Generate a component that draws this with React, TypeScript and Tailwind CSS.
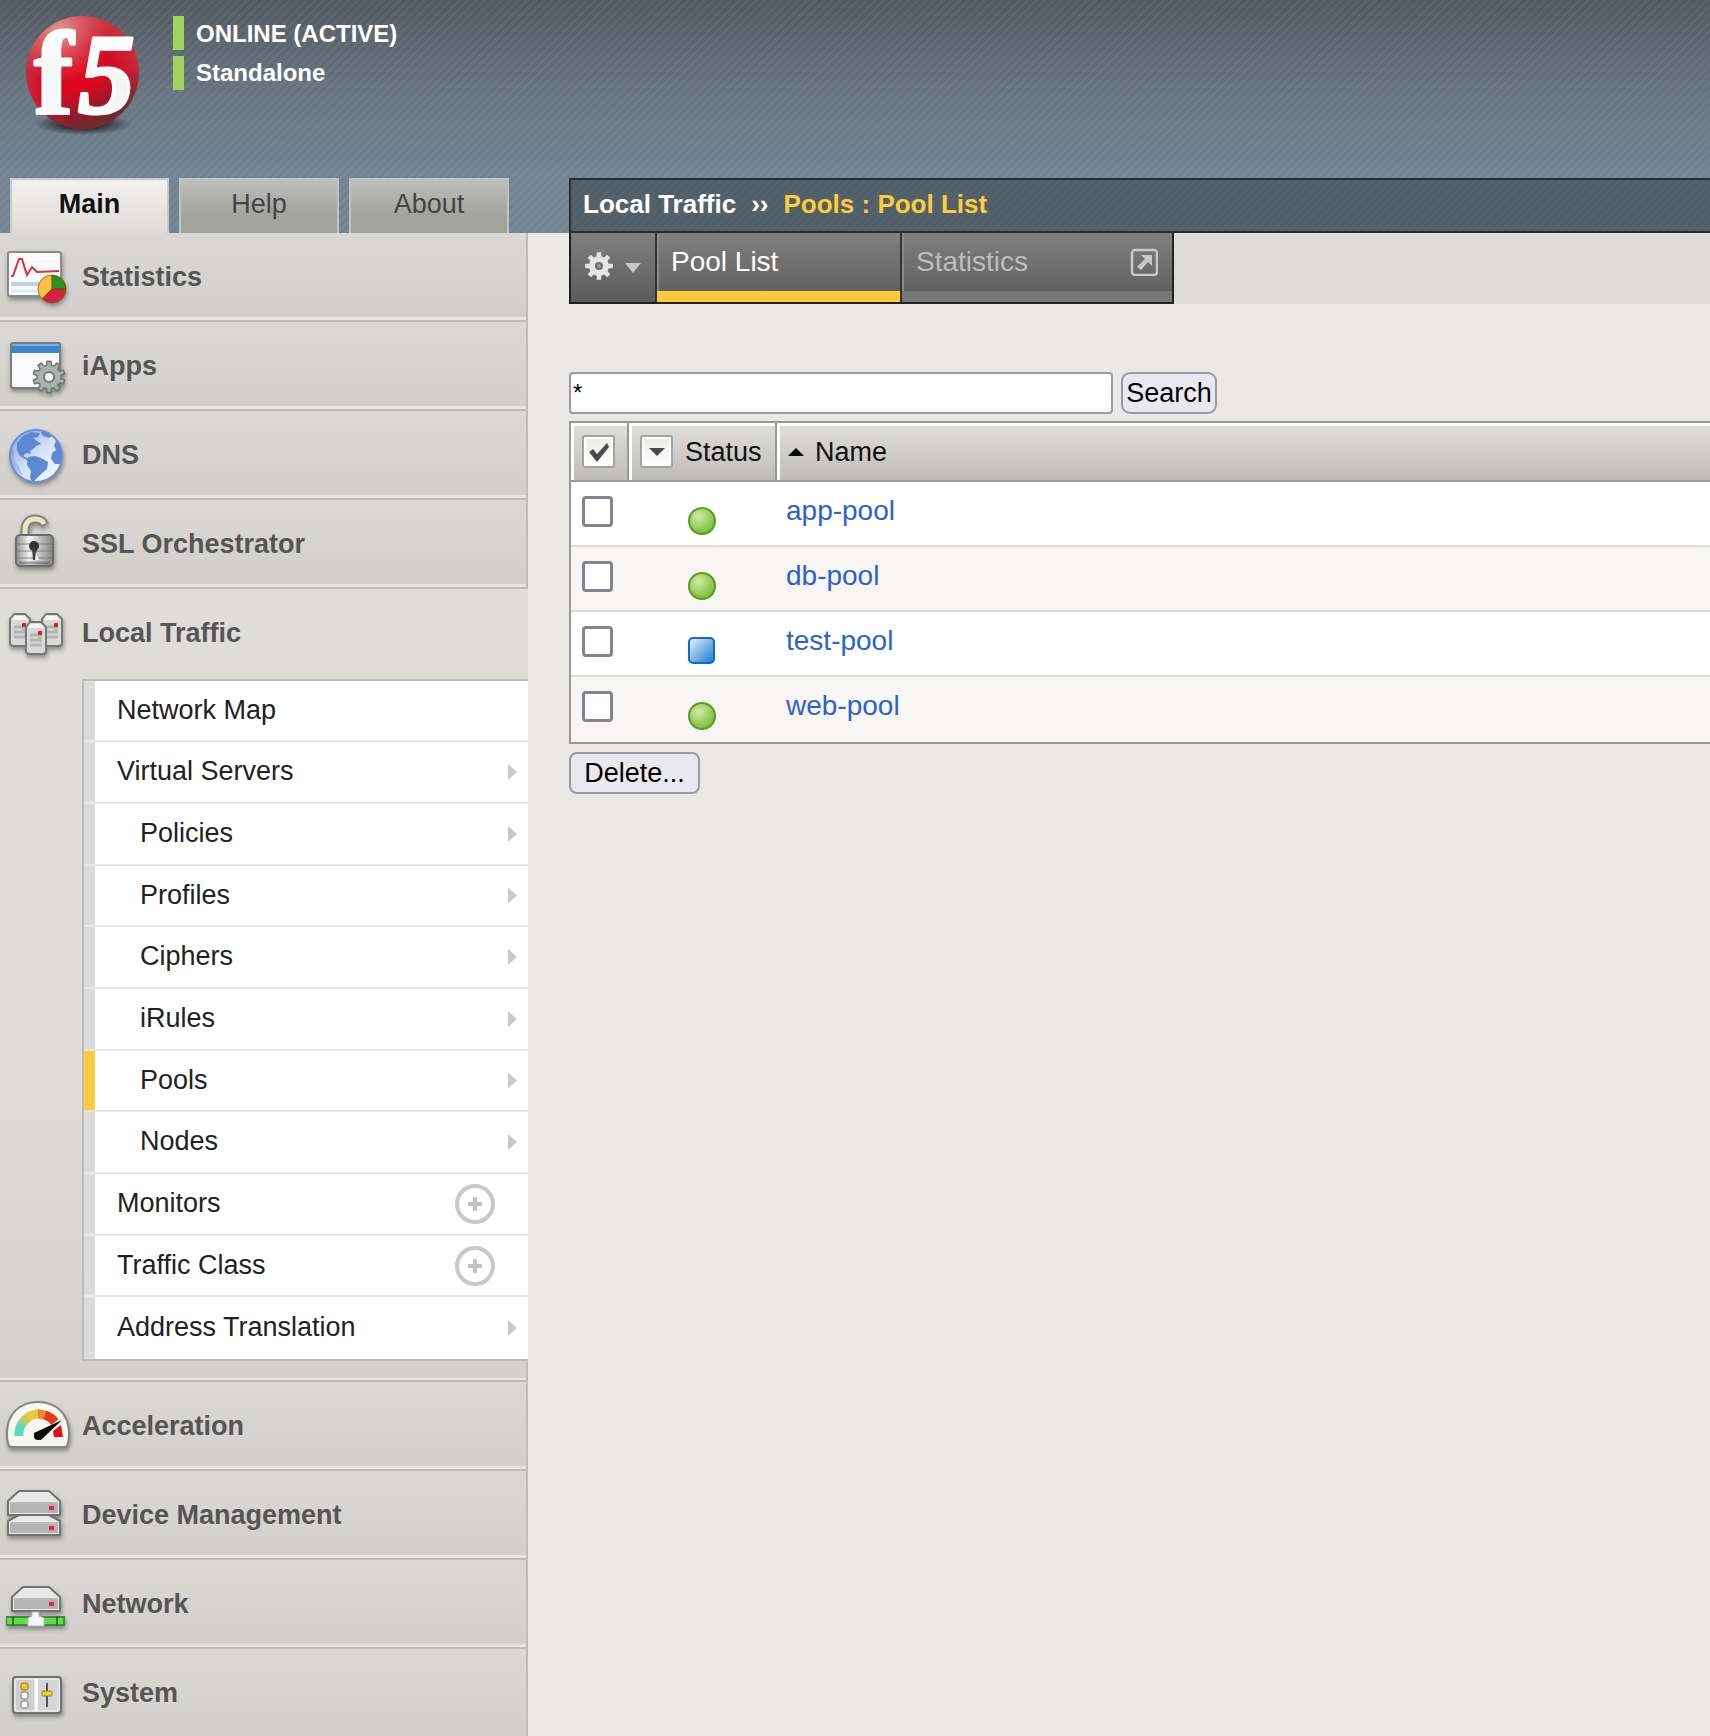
import React, { useState } from "react";

const shadow = "[filter:drop-shadow(1px_3px_2px_rgba(0,0,0,0.35))]";

function gearPath(cx: number, cy: number, teeth: number, outer: number, inner: number) {
  const step = (Math.PI * 2) / teeth;
  const pts: string[] = [];
  for (let i = 0; i < teeth; i++) {
    const a = i * step - Math.PI / 2;
    const corners: [number, number][] = [
      [a - step * 0.3, inner],
      [a - step * 0.2, outer],
      [a + step * 0.2, outer],
      [a + step * 0.3, inner],
    ];
    for (const [ang, r] of corners) {
      pts.push(`${(cx + Math.cos(ang) * r).toFixed(2)} ${(cy + Math.sin(ang) * r).toFixed(2)}`);
    }
  }
  return `M${pts.join("L")}Z`;
}

function Logo() {
  return (
    <svg className="h-[140px] w-[150px]" viewBox="0 0 150 140" role="img" aria-label="f5">
      <defs>
        <radialGradient id="ball" cx="0.5" cy="0.6" r="0.55">
          <stop offset="0" stopColor="#e2061f" />
          <stop offset="0.6" stopColor="#d30b25" />
          <stop offset="1" stopColor="#c8303c" />
        </radialGradient>
        <radialGradient id="shine" cx="0.3" cy="0.14" r="0.45">
          <stop offset="0" stopColor="#eeb0a8" stopOpacity="0.85" />
          <stop offset="1" stopColor="#e06a68" stopOpacity="0" />
        </radialGradient>
        <linearGradient id="ballshade" x1="0.4" y1="0.5" x2="0.6" y2="1">
          <stop offset="0.3" stopColor="#4a2a2c" stopOpacity="0" />
          <stop offset="0.85" stopColor="#4a3030" stopOpacity="0.7" />
        </linearGradient>
        <linearGradient id="letters" x1="0" y1="0" x2="0" y2="1">
          <stop offset="0" stopColor="#ffffff" />
          <stop offset="0.6" stopColor="#f2f5f5" />
          <stop offset="1" stopColor="#ffffff" />
        </linearGradient>
        <radialGradient id="ground">
          <stop offset="0.4" stopColor="#20262c" stopOpacity="0.9" />
          <stop offset="1" stopColor="#20262c" stopOpacity="0" />
        </radialGradient>
      </defs>
      <ellipse cx="83" cy="124" rx="48" ry="11" fill="url(#ground)" />
      <circle cx="82.500" cy="72.500" r="56.500" fill="url(#ball)" />
      <circle cx="82.500" cy="72.500" r="56.500" fill="url(#ballshade)" />
      <circle cx="82.500" cy="72.500" r="56.500" fill="url(#shine)" />
      <g fill="url(#letters)" stroke="#fbfcfc" strokeWidth="3" strokeLinejoin="round" fontWeight="700" fontFamily="'Liberation Serif', serif">
        <text x="34" y="114" fontSize="118">f</text>
        <text x="78" y="113" fontSize="114" fontStyle="italic">5</text>
      </g>
    </svg>
  );
}

function StatisticsIcon() {
  return (
    <svg className={`size-16 ${shadow}`} viewBox="0 -3 64 64" aria-hidden="true">
      <rect x="2" y="4" width="53" height="44" rx="2" fill="#fdfdfd" stroke="#8a8a8a" strokeWidth="2" />
      <path d="M5 14h48M5 20h48M5 26h48" stroke="#eceff2" strokeWidth="1" />
      <path d="M5 36h30" stroke="#b9d3e8" strokeWidth="4" />
      <path d="M5 43h28" stroke="#dfe9f2" strokeWidth="3" />
      <path d="M5 28h2l6-17h3l5 16 5-8 5 5 22-1" fill="none" stroke="#d0343f" strokeWidth="2" />
      <circle cx="46" cy="41" r="14" fill="#d4233a" />
      <path d="M46 41V27a14 14 0 0 1 14 14Z" fill="#27941f" />
      <path d="M46 41V27a14 14 0 0 0-10 24Z" fill="#f5c542" />
      <path d="M46 27V41H60M46 41 36 51" fill="none" stroke="#7a3a18" strokeWidth="1" />
      <circle cx="46" cy="41" r="14" fill="none" stroke="#7c4a20" strokeOpacity="0.6" strokeWidth="1" />
    </svg>
  );
}

function IAppsIcon() {
  return (
    <svg className={`size-16 ${shadow}`} viewBox="-1 -3 64 64" aria-hidden="true">
      <rect x="4" y="6" width="49" height="45" rx="2" fill="#f9f9fb" stroke="#7b7b7b" strokeWidth="2" />
      <rect x="5" y="7" width="47" height="9" fill="#3d86c6" />
      <path d="M5 8h47" stroke="#6db2ec" strokeWidth="2" />
      <path d={gearPath(42, 40, 10, 16, 12)} fill="#a7b1ae" stroke="#6f7775" strokeWidth="1.500" strokeLinejoin="round" />
      <circle cx="42" cy="40" r="5" fill="#f4f4f4" stroke="#6f7775" strokeWidth="2" />
    </svg>
  );
}

function DnsIcon() {
  return (
    <svg className={`size-16 ${shadow}`} viewBox="-1 -2 64 64" aria-hidden="true">
      <defs>
        <linearGradient id="sea" x1="0" y1="0" x2="1" y2="1">
          <stop offset="0" stopColor="#7d9ede" />
          <stop offset="0.5" stopColor="#d5e1f6" />
          <stop offset="1" stopColor="#ffffff" />
        </linearGradient>
        <clipPath id="globe">
          <circle cx="29" cy="31" r="26" />
        </clipPath>
      </defs>
      <circle cx="29" cy="31" r="26" fill="url(#sea)" />
      <g fill="#5d89d2" clipPath="url(#globe)">
        <path d="M10 18 16 11l8-4 9 1-2 4-5 1 4 3 4 3-5 2-3 3-3 2 1 3-5-1-3 3 4 2 5 4-4-1-8-5-3-6Z" />
        <path d="M21 32l7-1 6 2 7 4-1 7-6 5-6 6-2 3-3-5 1-7-4-6Z" />
        <path d="M34 7l7-1 5 4-4 3-6-2Z" />
        <path d="M57 16l-8 0-2 5 2 4-4 3-1 6 4 5 5 0 1 6 5-6V16Z" />
        <path d="M2 20l5 6 0 8 5 8 4 9-9-6-6-12Z" opacity="0.35" />
      </g>
      <circle cx="29" cy="31" r="26" fill="none" stroke="#6a8fd8" strokeWidth="2" />
    </svg>
  );
}

function LockIcon() {
  return (
    <svg className={`size-16 ${shadow}`} viewBox="-1 -1 64 64" aria-hidden="true">
      <defs>
        <linearGradient id="lockbody" x1="0" y1="0" x2="1" y2="0">
          <stop offset="0" stopColor="#8d8d8d" />
          <stop offset="0.35" stopColor="#f4f4f4" />
          <stop offset="1" stopColor="#858585" />
        </linearGradient>
      </defs>
      <path d="M18 25V17c0-6 3-11 10-11 5 0 8 2 10 6" fill="none" stroke="#86866a" strokeWidth="9" />
      <path d="M18 25V17c0-6 3-11 10-11 5 0 8 2 9 5" fill="none" stroke="#e6e5c8" strokeWidth="5" />
      <rect x="9" y="22" width="37" height="31" rx="4" fill="url(#lockbody)" stroke="#6d6d6d" strokeWidth="2" />
      <path d="M10 31h35M10 38h35M10 45h35" stroke="#6d6d6d" strokeOpacity="0.4" strokeWidth="2" />
      <path d="M12 50h31" stroke="#555" strokeOpacity="0.5" strokeWidth="3" />
      <circle cx="27" cy="33" r="5" fill="#333" />
      <path d="M25 34h4l2 13h-5Z" fill="#3b3b3b" />
      <path d="M29 38l3 9h-4Z" fill="#eee" />
    </svg>
  );
}

function MiniServer({ x, y }: { x: number; y: number }) {
  return (
    <g transform={`translate(${x} ${y})`}>
      <path d="M1 6 5 1H16L21 6V31L19 33H3L1 31Z" fill="#d9d9d9" stroke="#777" strokeWidth="2" strokeLinejoin="round" />
      <path d="M5 3H16l3 4H3Z" fill="#f6f6f6" />
      <path d="M5 14h12M5 19h12M5 24h12" stroke="#b2b2b2" strokeWidth="3" />
      <rect x="13" y="10" width="4" height="4" fill="#e8142c" />
      <rect x="13" y="15" width="4" height="3" fill="#8fe07a" />
    </g>
  );
}

function LocalTrafficIcon() {
  return (
    <svg className={`size-16 ${shadow}`} viewBox="0 -3 64 64" aria-hidden="true">
      <MiniServer x={3} y={9} />
      <MiniServer x={35} y={9} />
      <MiniServer x={19} y={17} />
    </svg>
  );
}

function AccelerationIcon() {
  return (
    <svg className={`size-16 ${shadow}`} viewBox="-1 0 64 64" aria-hidden="true">
      <path d="M3 53C0 50 0 45 0 39 0 20 13 8 31 8s31 12 31 31c0 6 0 11-3 14Z" fill="#f7f7f4" stroke="#858585" strokeWidth="2" />
      <path d="M12 42A19 20 0 0 1 16 28" fill="none" stroke="#5fd8c4" strokeWidth="9" />
      <path d="M15 30A19 20 0 0 1 22 23" fill="none" stroke="#b3cf66" strokeWidth="9" />
      <path d="M20 24A19 20 0 0 1 33 20" fill="none" stroke="#ecc83c" strokeWidth="9" />
      <path d="M31 20A19 20 0 0 1 40 22" fill="none" stroke="#ea8a25" strokeWidth="9" />
      <path d="M38 21A20 20 0 0 1 48 28" fill="none" stroke="#e33a18" strokeWidth="9" />
      <path d="M54 31l2 12h-9l-1-6Z" fill="#e30b17" />
      <path d="M55 26 34 46l-6-2-1-5Z" fill="#0b0b0b" />
      <circle cx="31" cy="42" r="4" fill="#0b0b0b" />
    </svg>
  );
}

function Chassis({ y, x = 2, w = 52, tall = true }: { y: number; x?: number; w?: number; tall?: boolean }) {
  const h = tall ? 24 : 20;
  return (
    <g transform={`translate(${x} ${y})`}>
      <path
        d={`M0 ${h - 14}L11 0H${w - 11}L${w} ${h - 14}V${h}H0Z`}
        fill="#e9e9e9"
        stroke="#727272"
        strokeWidth="2"
        strokeLinejoin="round"
      />
      <rect x="2" y={h - 11} width={w - 4} height="9" fill="#b4b4b4" />
      <path d={`M2 ${h - 12}H${w - 2}`} stroke="#8d8d8d" strokeWidth="1" />
      <rect x={w - 11} y={h - 9} width="5" height="4" fill="#ee2236" />
    </g>
  );
}

function DeviceIcon() {
  return (
    <svg className={`size-16 ${shadow}`} viewBox="0 -4 64 64" aria-hidden="true">
      <Chassis y={28} tall={false} />
      <Chassis y={4} />
    </svg>
  );
}

function NetworkIcon() {
  return (
    <svg className={`size-16 ${shadow}`} viewBox="0 -5 64 64" aria-hidden="true">
      <Chassis y={10} x={6} w={48} tall />
      <path d="M0 40h58v8H0Z" fill="#63d94f" stroke="#3c8f30" strokeWidth="2" />
      <path d="M7 39v10M51 39v10" stroke="#2f7a26" strokeWidth="2" />
      <path d="M22 49v-8l4-2v-4h7v4l5 2v8Z" fill="#f7f7f7" stroke="#bbb" strokeWidth="1" />
    </svg>
  );
}

function SystemIcon() {
  return (
    <svg className={`size-16 ${shadow}`} viewBox="-1 -5 64 64" aria-hidden="true">
      <rect x="6" y="11" width="48" height="36" rx="3" fill="#e6e6e6" stroke="#707070" strokeWidth="2" />
      <rect x="9" y="14" width="19" height="30" fill="#cfcfcf" />
      <rect x="31" y="14" width="20" height="30" fill="#d6d6d6" />
      <path d="M29 13v32" stroke="#fafafa" strokeWidth="3" />
      <rect x="14" y="17" width="7" height="7" rx="2" fill="#f5c910" stroke="#8a7a30" />
      <rect x="14" y="26" width="7" height="7" rx="2" fill="#fff" stroke="#777" />
      <rect x="14" y="35" width="7" height="7" rx="2" fill="#fff" stroke="#777" />
      <path d="M40 17v24" stroke="#555" strokeWidth="2" />
      <rect x="35" y="25" width="10" height="5" rx="1" fill="#f5d322" stroke="#8a7a30" />
    </svg>
  );
}

type SubItem = { label: string; nested?: boolean; add?: boolean; arrow?: boolean; active?: boolean };

const subItems: SubItem[] = [
  { label: "Network Map" },
  { label: "Virtual Servers", arrow: true },
  { label: "Policies", nested: true, arrow: true },
  { label: "Profiles", nested: true, arrow: true },
  { label: "Ciphers", nested: true, arrow: true },
  { label: "iRules", nested: true, arrow: true },
  { label: "Pools", nested: true, arrow: true, active: true },
  { label: "Nodes", nested: true, arrow: true },
  { label: "Monitors", add: true },
  { label: "Traffic Class", add: true },
  { label: "Address Translation", arrow: true },
];

function SubMenu() {
  return (
    <ul className="-mr-0.5 ml-[82px] border-t-2 border-b-2 border-l-2 border-[#bdbcbb]">
      {subItems.map((item) => (
        <li
          key={item.label}
          className="flex h-[62px] border-b-2 border-[#e6e6e6] bg-white last:border-b-0 [&:nth-child(3n+1)]:h-[61px]"
        >
          <span className={`w-[11px] shrink-0 ${item.active ? "bg-[#ffcb3b]" : "bg-[#dcdcdc]"}`} />
          <a href="#" className={`flex flex-1 items-center pb-0.5 text-[27px] leading-8 text-[#222] ${item.nested ? "pl-[45px]" : "pl-[22px]"}`}>
            {item.label}
          </a>
          {item.arrow && (
            <svg className="mr-2.5 h-full w-[11px]" viewBox="0 0 11 18" aria-hidden="true">
              <path d="M1 1v16l9-8Z" fill="#c9c9c9" />
            </svg>
          )}
          {item.add && (
            <button type="button" aria-label={`Add ${item.label}`} className="mr-[33px] flex items-center">
              <svg className="size-10" viewBox="0 0 40 40" aria-hidden="true">
                <circle cx="20" cy="20" r="18" fill="none" stroke="#c9c9c9" strokeWidth="4" />
                <path d="M20 13v14M13 20h14" stroke="#c2c2c2" strokeWidth="4" />
              </svg>
            </button>
          )}
        </li>
      ))}
    </ul>
  );
}

const sections = [
  { label: "Statistics", icon: <StatisticsIcon /> },
  { label: "iApps", icon: <IAppsIcon /> },
  { label: "DNS", icon: <DnsIcon /> },
  { label: "SSL Orchestrator", icon: <LockIcon /> },
  { label: "Local Traffic", icon: <LocalTrafficIcon />, open: true },
  { label: "Acceleration", icon: <AccelerationIcon /> },
  { label: "Device Management", icon: <DeviceIcon /> },
  { label: "Network", icon: <NetworkIcon /> },
  { label: "System", icon: <SystemIcon /> },
];

function Sidebar() {
  return (
    <nav aria-label="Main" className="w-[528px] shrink-0 border-r-2 border-[#bebdbc] bg-[#dddcd8]">
      {sections.map((s) => (
        <div
          key={s.label}
          className={`border-b-2 border-[#bcbbba] last:border-b-0 last:shadow-none ${
            s.open
              ? "bg-linear-to-b from-[#deddd9] from-60% to-[#d2d1cd] pb-[19px] shadow-[inset_0_-2px_0_#e8e7e4]"
              : "bg-linear-to-b from-[#dad9d5] to-[#d0cfcb] shadow-[inset_0_-3px_0_#e6e5e2]"
          }`}
        >
          <a
            href="#"
            className={`flex items-center gap-3 pl-1.5 text-[27px] leading-8 font-bold text-[#555] ${
              s.open ? "-mr-0.5 h-[90px] bg-[#deddd9] pb-[3px]" : "h-[87px]"
            }`}
          >
            {s.icon}
            <span>{s.label}</span>
          </a>
          {s.open && <SubMenu />}
        </div>
      ))}
    </nav>
  );
}

function StatusIcon({ kind }: { kind: string }) {
  if (kind === "unknown") {
    return (
      <svg className="size-7" viewBox="0 0 28 28" role="img" aria-label="Unknown">
        <defs>
          <linearGradient id="blue" x1="0" y1="0" x2="1" y2="1">
            <stop offset="0.1" stopColor="#d3e6f6" />
            <stop offset="0.9" stopColor="#2c86d3" />
          </linearGradient>
        </defs>
        <rect x="1" y="1" width="25" height="25" rx="4" fill="url(#blue)" stroke="#0c6cc8" strokeWidth="2" />
      </svg>
    );
  }
  return (
    <svg className="size-7" viewBox="0 0 28 28" role="img" aria-label="Available">
      <defs>
        <radialGradient id="green" cx="0.38" cy="0.32" r="0.7">
          <stop offset="0" stopColor="#d3eaa6" />
          <stop offset="1" stopColor="#7ab93a" />
        </radialGradient>
      </defs>
      <circle cx="14" cy="14" r="13" fill="url(#green)" stroke="#56a01c" strokeWidth="2" />
    </svg>
  );
}

const pools = [
  { name: "app-pool", status: "available" },
  { name: "db-pool", status: "available" },
  { name: "test-pool", status: "unknown" },
  { name: "web-pool", status: "available" },
];

const headBox =
  "flex h-[33px] w-[33px] items-center justify-center rounded-[3px] border-2 border-[#a3a3a1] bg-linear-to-b from-[#ebebe8] to-white shadow-[inset_0_0_0_2px_#fff]";
const th = "h-[59px] border-r-2 border-b-2 border-[#999] p-0 text-left font-normal shadow-[inset_4px_4px_0_-1px_#fff] last:border-r-0";

function PoolTable() {
  return (
    <table className="mt-[7px] w-full border-separate border-spacing-0 border-t-2 border-b-2 border-l-2 border-[#999]">
      <thead>
        <tr className="bg-linear-to-b from-[#e0dfdc] to-[#bdbcb8] text-[27px] leading-8 text-[#111]">
          <th className={`${th} w-[58px]`}>
            <button type="button" aria-label="Select all" className={`${headBox} ml-[11px]`}>
              <svg className="h-5 w-5" viewBox="0 0 20 20" aria-hidden="true">
                <path d="M0 10l4-3 4 5 10-11 2 4L8 20Z" fill="#4a4a4a" />
              </svg>
            </button>
          </th>
          <th className={`${th} w-[148px]`}>
            <div className="flex items-center gap-3 pl-[11px]">
              <button type="button" aria-label="Filter by status" className={headBox}>
                <svg className="h-2 w-4" viewBox="0 0 16 8" aria-hidden="true">
                  <path d="M0 0h16L8 8Z" fill="#4a4a4a" />
                </svg>
              </button>
              Status
            </div>
          </th>
          <th className={th}>
            <div className="flex items-center gap-[11px] pl-[11px]">
              <svg className="h-2 w-4" viewBox="0 0 16 8" aria-hidden="true">
                <path d="M0 8h16L8 0Z" fill="#000" />
              </svg>
              Name
            </div>
          </th>
        </tr>
      </thead>
      <tbody className="text-[28px] leading-8 [&>tr:last-child>td]:border-b-0">
        {pools.map((p) => (
          <tr key={p.name} className="bg-white align-top even:bg-[#f7f6f4] [&>td]:border-b-2 [&>td]:border-[#dcdcdb]">
            <td className="h-[65px] pt-[14px] pl-[11px]">
              <input
                type="checkbox"
                aria-label={`Select ${p.name}`}
                className="block size-[31px] appearance-none rounded-[4px] border-[3px] border-[#84838f] bg-white"
              />
            </td>
            <td className="pt-[25px] pl-[59px]">
              <StatusIcon kind={p.status} />
            </td>
            <td className="pt-[13px] pl-[9px]">
              <a href="#" className="text-[#2d62c9]">{p.name}</a>
            </td>
          </tr>
        ))}
      </tbody>
    </table>
  );
}

function MenuBar() {
  return (
    <div className="flex bg-[#dddcd8]">
      <div className="flex h-[71px] border-x-2 border-b-2 border-[#222] bg-linear-to-b from-[#808080] to-[#5c5c5c]">
        <button type="button" aria-label="Options" className="flex w-[84px] items-center gap-3 pb-1 pl-3.5">
          <svg className="size-7" viewBox="0 0 28 28" aria-hidden="true">
            <path fillRule="evenodd" d={`${gearPath(14, 14, 8, 14, 10)}M14 10a4 4 0 1 0 0 8a4 4 0 1 0 0-8Z`} fill="#e6e6e6" />
            <circle cx="14" cy="14" r="2" fill="#999" />
          </svg>
          <svg className="mt-1 h-2.5 w-4" viewBox="0 0 16 10" aria-hidden="true">
            <path d="M0 0h16L8 10Z" fill="#c8c8c8" />
          </svg>
        </button>
        <div className="flex w-[245px] border-l-2 border-[#333] text-[28px] leading-8">
          <a href="#" className="flex-1 border-b-[11px] border-[#ffcb3b] pt-[13px] pl-3.5 text-white shadow-[inset_2px_0_0_#8a8a8a]">
            Pool List
          </a>
        </div>
        <div className="flex w-[272px] border-l-2 border-[#333] text-[28px] leading-8">
          <a
            href="#"
            className="flex flex-1 justify-between border-b-[11px] border-[#777] px-3.5 pt-[13px] text-[#bdbdbd] shadow-[inset_2px_0_0_#8a8a8a]"
          >
            Statistics
            <svg className="mt-0.5 size-7" viewBox="0 0 28 28" aria-hidden="true">
              <rect x="2" y="2" width="25" height="25" rx="3" fill="none" stroke="#c9c9c9" strokeWidth="2.500" />
              <path d="M11 7h11v11l-4-4-7 8-4-3 8-8Z" fill="#c9c9c9" />
            </svg>
          </a>
        </div>
      </div>
    </div>
  );
}

const stripes =
  "bg-[repeating-linear-gradient(135deg,rgba(255,255,255,0.05)_0px,rgba(255,255,255,0.05)_2px,transparent_3px,transparent_5px,rgba(255,255,255,0.05)_6px),linear-gradient(#51585f,#66747f_40%,#718290_75%,#718290)]";

export default function App() {
  const [query, setQuery] = useState("*");
  return (
    <div className="flex min-h-screen flex-col bg-[#e9e8e4] font-['Liberation_Sans',Arial,sans-serif]">
      <header className={`flex flex-col ${stripes}`}>
        <div className="flex h-[178px]">
          <Logo />
          <div className="flex flex-col gap-1.5 pt-4 pl-[23px] text-[24px] leading-8 font-bold text-white">
            <div className="flex items-center gap-3">
              <span className="h-[34px] w-[11px] bg-[#9fd25f]" />
              <span className="pt-0.5">ONLINE (ACTIVE)</span>
            </div>
            <div className="flex items-center gap-3">
              <span className="h-[34px] w-[11px] bg-[#9fd25f]" />
              Standalone
            </div>
          </div>
        </div>
        <div className="flex">
          <div className="flex w-[569px] shrink-0 gap-2.5 pl-2.5 text-[27px] leading-8">
            <button type="button" className="h-[55px] w-[159px] border-2 border-b-0 border-[#c9c9c6] bg-linear-to-b from-[#f1f0ee] to-[#dddcd8] pb-1.5 font-bold text-[#111]">
              Main
            </button>
            <button type="button" className="h-[55px] w-[160px] border-2 border-b-0 border-[#c2c2bf] bg-linear-to-b from-[#bdbdb9] to-[#a3a39e] to-70% pb-1.5 text-[#444]">
              Help
            </button>
            <button type="button" className="h-[55px] w-[160px] border-2 border-b-0 border-[#c2c2bf] bg-linear-to-b from-[#bdbdb9] to-[#a3a39e] to-70% pb-1.5 text-[#444]">
              About
            </button>
          </div>
          <div className="flex h-[55px] flex-1 items-center gap-[15px] border-2 border-r-0 border-[#2b2e31] bg-[#303b41]/50 pb-1 pl-3 text-[26px] leading-8 font-bold text-white">
            <span>Local Traffic</span>
            <span>››</span>
            <span className="text-[#ffcb3b]">Pools : Pool List</span>
          </div>
        </div>
      </header>
      <div className="flex flex-1">
        <Sidebar />
        <main className="min-w-0 flex-1 pl-[41px]">
          <MenuBar />
          <form className="mt-[68px] flex gap-2" onSubmit={(e) => e.preventDefault()}>
            <input
              aria-label="Search pools"
              value={query}
              onChange={(e) => setQuery(e.target.value)}
              className="h-[42px] w-[544px] rounded-[4px] border-2 border-[#9a9aa6] bg-white px-0.5 text-[24px] leading-8 text-black"
            />
            <button type="submit" className="h-[42px] w-[96px] rounded-[9px] border-2 border-[#9a9aa6] bg-[#e9e9ed] text-[27px] leading-8 text-black">
              Search
            </button>
          </form>
          <PoolTable />
          <button type="button" className="mt-2 h-[42px] w-[131px] rounded-[8px] border-2 border-[#9a9aa6] bg-[#e9e9ed] text-[27px] leading-8 text-black">
            Delete...
          </button>
        </main>
      </div>
    </div>
  );
}
